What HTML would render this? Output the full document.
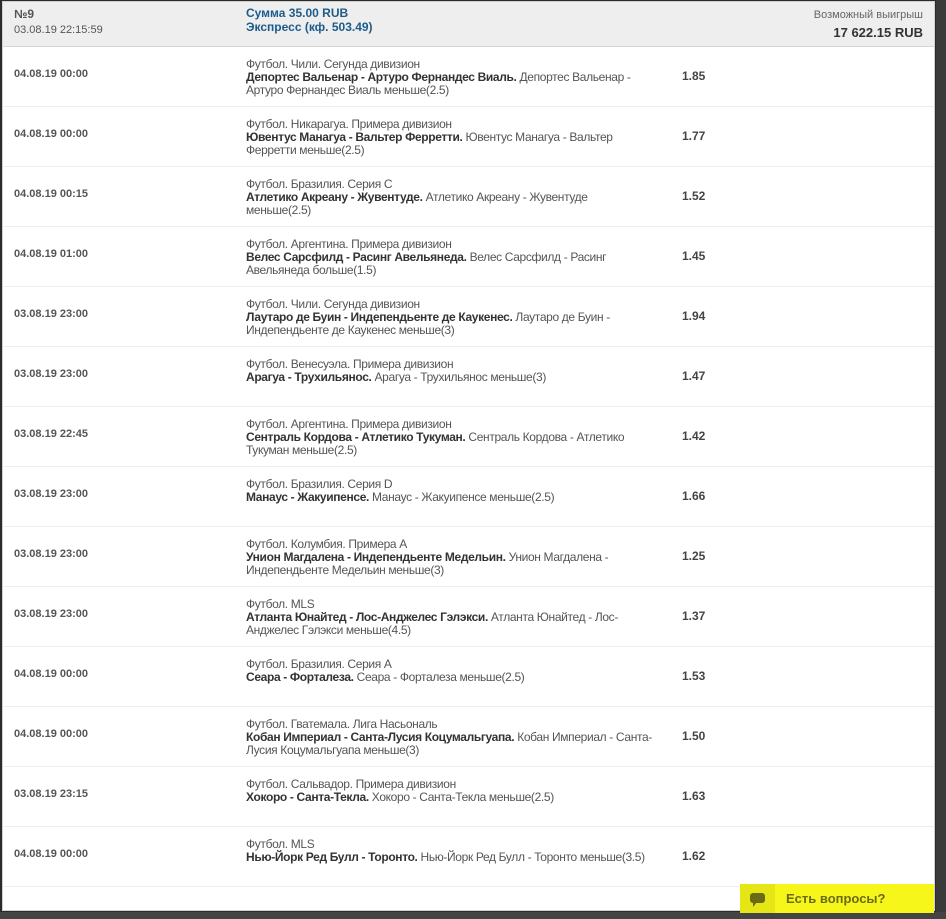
<!DOCTYPE html>
<html><head><meta charset="utf-8"><style>
body{margin:0;width:946px;height:919px;background:#2b2b2b;overflow:hidden;font-family:"Liberation Sans Narrow","Liberation Sans",sans-serif;color:#444;}
.panel{position:absolute;left:2px;top:1px;width:933px;height:910px;background:#fff;border:1px solid #d0d0d0;box-sizing:border-box;}
.rb{position:absolute;left:936px;top:0;width:10px;height:919px;background:#3a3a3a;}
.hdr{position:absolute;left:0;top:0;width:931px;height:44px;background:#eee;border-bottom:1px solid #d6d6d6;}
.hdr .a{position:absolute;left:11px;top:5px;font-weight:bold;font-size:12px;color:#555;}
.hdr .b{position:absolute;left:11px;top:22px;font-size:11px;color:#555;}
.hdr .c{position:absolute;left:243px;top:4px;font-weight:bold;font-size:12px;color:#1d5b8a;line-height:14px}
.hdr .d{position:absolute;right:11px;top:7px;font-size:11px;color:#666;}
.hdr .e{position:absolute;right:11px;top:23px;font-size:13px;font-weight:bold;color:#333;}
.row{position:absolute;left:0;width:931px;height:60px;border-bottom:1px solid #eee;font-size:12px;}
.row .dt{position:absolute;left:11px;top:22px;font-weight:bold;font-size:11px;color:#555;}
.row .tx{position:absolute;left:243px;top:12px;width:420px;line-height:13px;color:#555;letter-spacing:-0.35px;white-space:nowrap}
.row .tx b{color:#333}
.row .od{position:absolute;left:679px;top:23px;font-weight:bold;color:#444;}
.bot{position:absolute;left:0;top:912px;width:946px;height:7px;background:#444;}
.q{position:absolute;left:740px;top:884px;width:194px;height:29px;background:#f6f61a;}
.q .ic{position:absolute;left:0;top:0;width:35px;height:29px;background:#e6e617;}
.q .t{position:absolute;left:46px;top:7px;font-family:"Liberation Sans",sans-serif;font-weight:bold;font-size:13px;color:#6b6b15;}
</style></head><body>
<div class="rb"></div>
<div class="bot"></div>
<div class="panel">
<div class="hdr"><div class="a">№9</div><div class="b">03.08.19 22:15:59</div>
<div class="c">Сумма 35.00 RUB<br>Экспресс (кф. 503.49)</div>
<div class="d">Возможный выигрыш</div><div class="e">17 622.15 RUB</div></div>

<div class="row" style="top:44px"><div class="dt">04.08.19 00:00</div><div class="tx">Футбол. Чили. Сегунда дивизион<br><b>Депортес Вальенар - Артуро Фернандес Виаль.</b> Депортес Вальенар -<br>Артуро Фернандес Виаль меньше(2.5)</div><div class="od">1.85</div></div>
<div class="row" style="top:104px"><div class="dt">04.08.19 00:00</div><div class="tx">Футбол. Никарагуа. Примера дивизион<br><b>Ювентус Манагуа - Вальтер Ферретти.</b> Ювентус Манагуа - Вальтер<br>Ферретти меньше(2.5)</div><div class="od">1.77</div></div>
<div class="row" style="top:164px"><div class="dt">04.08.19 00:15</div><div class="tx">Футбол. Бразилия. Серия C<br><b>Атлетико Акреану - Жувентуде.</b> Атлетико Акреану - Жувентуде<br>меньше(2.5)</div><div class="od">1.52</div></div>
<div class="row" style="top:224px"><div class="dt">04.08.19 01:00</div><div class="tx">Футбол. Аргентина. Примера дивизион<br><b>Велес Сарсфилд - Расинг Авельянеда.</b> Велес Сарсфилд - Расинг<br>Авельянеда больше(1.5)</div><div class="od">1.45</div></div>
<div class="row" style="top:284px"><div class="dt">03.08.19 23:00</div><div class="tx">Футбол. Чили. Сегунда дивизион<br><b>Лаутаро де Буин - Индепендьенте де Каукенес.</b> Лаутаро де Буин -<br>Индепендьенте де Каукенес меньше(3)</div><div class="od">1.94</div></div>
<div class="row" style="top:344px"><div class="dt">03.08.19 23:00</div><div class="tx">Футбол. Венесуэла. Примера дивизион<br><b>Арагуа - Трухильянос.</b> Арагуа - Трухильянос меньше(3)</div><div class="od">1.47</div></div>
<div class="row" style="top:404px"><div class="dt">03.08.19 22:45</div><div class="tx">Футбол. Аргентина. Примера дивизион<br><b>Сентраль Кордова - Атлетико Тукуман.</b> Сентраль Кордова - Атлетико<br>Тукуман меньше(2.5)</div><div class="od">1.42</div></div>
<div class="row" style="top:464px"><div class="dt">03.08.19 23:00</div><div class="tx">Футбол. Бразилия. Серия D<br><b>Манаус - Жакуипенсе.</b> Манаус - Жакуипенсе меньше(2.5)</div><div class="od">1.66</div></div>
<div class="row" style="top:524px"><div class="dt">03.08.19 23:00</div><div class="tx">Футбол. Колумбия. Примера A<br><b>Унион Магдалена - Индепендьенте Медельин.</b> Унион Магдалена -<br>Индепендьенте Медельин меньше(3)</div><div class="od">1.25</div></div>
<div class="row" style="top:584px"><div class="dt">03.08.19 23:00</div><div class="tx">Футбол. MLS<br><b>Атланта Юнайтед - Лос-Анджелес Гэлэкси.</b> Атланта Юнайтед - Лос-<br>Анджелес Гэлэкси меньше(4.5)</div><div class="od">1.37</div></div>
<div class="row" style="top:644px"><div class="dt">04.08.19 00:00</div><div class="tx">Футбол. Бразилия. Серия A<br><b>Сеара - Форталеза.</b> Сеара - Форталеза меньше(2.5)</div><div class="od">1.53</div></div>
<div class="row" style="top:704px"><div class="dt">04.08.19 00:00</div><div class="tx">Футбол. Гватемала. Лига Насьональ<br><b>Кобан Империал - Санта-Лусия Коцумальгуапа.</b> Кобан Империал - Санта-<br>Лусия Коцумальгуапа меньше(3)</div><div class="od">1.50</div></div>
<div class="row" style="top:764px"><div class="dt">03.08.19 23:15</div><div class="tx">Футбол. Сальвадор. Примера дивизион<br><b>Хокоро - Санта-Текла.</b> Хокоро - Санта-Текла меньше(2.5)</div><div class="od">1.63</div></div>
<div class="row" style="top:824px"><div class="dt">04.08.19 00:00</div><div class="tx">Футбол. MLS<br><b>Нью-Йорк Ред Булл - Торонто.</b> Нью-Йорк Ред Булл - Торонто меньше(3.5)</div><div class="od">1.62</div></div>
</div>
<div class="q"><div class="ic"><svg width="35" height="29" viewBox="0 0 35 29"><rect x="10" y="9" width="15" height="10" rx="3" fill="#6b6b15"/><path d="M13 18 L13 23 L17 18Z" fill="#6b6b15"/></svg></div><div class="t">Есть вопросы?</div></div>
</body></html>
